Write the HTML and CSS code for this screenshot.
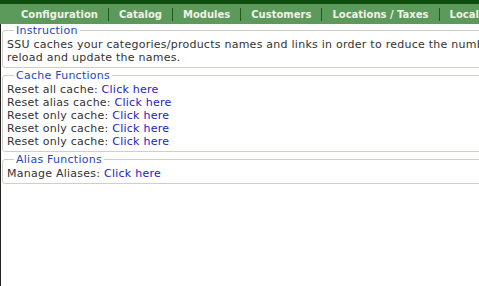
FILE: index.html
```
<!DOCTYPE html>
<html>
<head>
<meta charset="utf-8">
<link rel="stylesheet" href="styles.css">
</head>
<body>
<div class="page">
  <div class="topbar"></div>
  <nav class="nav">
    <span class="nav-item">Configuration</span>
    <span class="nav-item">Catalog</span>
    <span class="nav-item">Modules</span>
    <span class="nav-item">Customers</span>
    <span class="nav-item">Locations / Taxes</span>
    <span class="nav-item">Localization</span>
    <span class="nav-item">Reports</span>
  </nav>
  <div class="main">
    <fieldset class="box">
      <legend>Instruction</legend>
      <div class="row">SSU caches your categories/products names and links in order to reduce the number of queries. If you have changed the names, you need to</div>
      <div class="row">reload and update the names.</div>
    </fieldset>
    <fieldset class="box">
      <legend>Cache Functions</legend>
      <div class="row">Reset all cache: <a href="#">Click here</a></div>
      <div class="row">Reset alias cache: <a href="#">Click here</a></div>
      <div class="row">Reset only cache: <a href="#">Click here</a></div>
      <div class="row">Reset only cache: <a href="#">Click here</a></div>
      <div class="row">Reset only cache: <a href="#">Click here</a></div>
    </fieldset>
    <fieldset class="box">
      <legend>Alias Functions</legend>
      <div class="row">Manage Aliases: <a href="#">Click here</a></div>
    </fieldset>
  </div>
</div>
</body>
</html>
```
FILE: styles.css
```
html, body {
  margin: 0;
  padding: 0;
  background: #ffffff;
  overflow: hidden;
}
body {
  font-family: "DejaVu Sans", Verdana, sans-serif;
  font-size: 11px;
  color: #333333;
}
.page {
  width: 760px;
  height: 286px;
  display: flex;
  flex-direction: column;
}
.topbar {
  height: 4px;
  background: #0d4d0d;
}
.nav {
  height: 20px;
  background: #5c9a5c;
  display: flex;
  align-items: center;
  padding-left: 11px;
  white-space: nowrap;
}
.nav-item {
  color: #f2f2e6;
  font-weight: bold;
  font-size: 10px;
  padding: 0 10px;
  line-height: 13px;
  border-left: 1px solid #1f5a1f;
}
.nav-item:first-child {
  border-left: none;
}
.main {
  flex: 1;
  border-left: 1px solid #222222;
  background: #ffffff;
  padding-left: 1px;
}
.box {
  margin: 0 0 1px 0;
  padding: 1px 4px 3px 4px;
  border: 1px solid #cfcfc8;
  border-radius: 3px 0 0 3px;
  background: #ffffff;
  min-width: 0;
}
.box legend {
  color: #2447c0;
  padding: 0 2px;
  margin-left: 7px;
  line-height: 13px;
  letter-spacing: 0.25px;
}
.row {
  line-height: 13px;
  white-space: nowrap;
  letter-spacing: 0.25px;
}
.row a {
  color: #1c1cc4;
  text-decoration: none;
}
```
